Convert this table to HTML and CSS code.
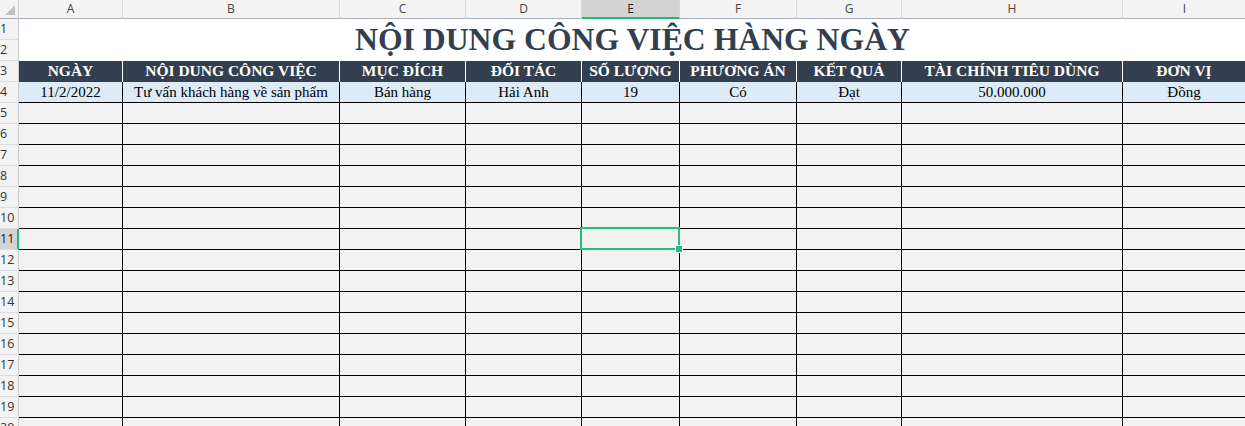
FILE: index.html
```html
<!DOCTYPE html>
<html lang="vi">
<head>
<meta charset="utf-8">
<title>Nội dung công việc hàng ngày</title>
<link rel="stylesheet" href="styles.css">
</head>
<body>
<div class="sheet">
  <div class="corner"><span class="tri"></span></div>
  <div class="ch">A</div><div class="ch">B</div><div class="ch">C</div><div class="ch">D</div><div class="ch sel">E</div><div class="ch">F</div><div class="ch">G</div><div class="ch">H</div><div class="ch last">I</div>

  <div class="rh">1</div>
  <div class="title">NỘI DUNG CÔNG VIỆC HÀNG NGÀY</div>
  <div class="rh">2</div>

  <div class="rh">3</div>
  <div class="hd">NGÀY</div><div class="hd">NỘI DUNG CÔNG VIỆC</div><div class="hd">MỤC ĐÍCH</div><div class="hd">ĐỐI TÁC</div><div class="hd">SỐ LƯỢNG</div><div class="hd">PHƯƠNG ÁN</div><div class="hd">KẾT QUẢ</div><div class="hd">TÀI CHÍNH TIÊU DÙNG</div><div class="hd">ĐƠN VỊ</div>

  <div class="rh">4</div>
  <div class="dt">11/2/2022</div><div class="dt">Tư vấn khách hàng về sản phẩm</div><div class="dt">Bán hàng</div><div class="dt">Hải Anh</div><div class="dt">19</div><div class="dt">Có</div><div class="dt">Đạt</div><div class="dt">50.000.000</div><div class="dt">Đồng</div>

  <div class="rh">5</div><div class="c"></div><div class="c"></div><div class="c"></div><div class="c"></div><div class="c"></div><div class="c"></div><div class="c"></div><div class="c"></div><div class="c"></div>
  <div class="rh">6</div><div class="c"></div><div class="c"></div><div class="c"></div><div class="c"></div><div class="c"></div><div class="c"></div><div class="c"></div><div class="c"></div><div class="c"></div>
  <div class="rh">7</div><div class="c"></div><div class="c"></div><div class="c"></div><div class="c"></div><div class="c"></div><div class="c"></div><div class="c"></div><div class="c"></div><div class="c"></div>
  <div class="rh">8</div><div class="c"></div><div class="c"></div><div class="c"></div><div class="c"></div><div class="c"></div><div class="c"></div><div class="c"></div><div class="c"></div><div class="c"></div>
  <div class="rh">9</div><div class="c"></div><div class="c"></div><div class="c"></div><div class="c"></div><div class="c"></div><div class="c"></div><div class="c"></div><div class="c"></div><div class="c"></div>
  <div class="rh">10</div><div class="c"></div><div class="c"></div><div class="c"></div><div class="c"></div><div class="c"></div><div class="c"></div><div class="c"></div><div class="c"></div><div class="c"></div>
  <div class="rh sel">11</div><div class="c"></div><div class="c"></div><div class="c"></div><div class="c"></div><div class="c active"><span class="handle"></span></div><div class="c"></div><div class="c"></div><div class="c"></div><div class="c"></div>
  <div class="rh">12</div><div class="c"></div><div class="c"></div><div class="c"></div><div class="c"></div><div class="c"></div><div class="c"></div><div class="c"></div><div class="c"></div><div class="c"></div>
  <div class="rh">13</div><div class="c"></div><div class="c"></div><div class="c"></div><div class="c"></div><div class="c"></div><div class="c"></div><div class="c"></div><div class="c"></div><div class="c"></div>
  <div class="rh">14</div><div class="c"></div><div class="c"></div><div class="c"></div><div class="c"></div><div class="c"></div><div class="c"></div><div class="c"></div><div class="c"></div><div class="c"></div>
  <div class="rh">15</div><div class="c"></div><div class="c"></div><div class="c"></div><div class="c"></div><div class="c"></div><div class="c"></div><div class="c"></div><div class="c"></div><div class="c"></div>
  <div class="rh">16</div><div class="c"></div><div class="c"></div><div class="c"></div><div class="c"></div><div class="c"></div><div class="c"></div><div class="c"></div><div class="c"></div><div class="c"></div>
  <div class="rh">17</div><div class="c"></div><div class="c"></div><div class="c"></div><div class="c"></div><div class="c"></div><div class="c"></div><div class="c"></div><div class="c"></div><div class="c"></div>
  <div class="rh">18</div><div class="c"></div><div class="c"></div><div class="c"></div><div class="c"></div><div class="c"></div><div class="c"></div><div class="c"></div><div class="c"></div><div class="c"></div>
  <div class="rh">19</div><div class="c"></div><div class="c"></div><div class="c"></div><div class="c"></div><div class="c"></div><div class="c"></div><div class="c"></div><div class="c"></div><div class="c"></div>
  <div class="rh">20</div><div class="c"></div><div class="c"></div><div class="c"></div><div class="c"></div><div class="c"></div><div class="c"></div><div class="c"></div><div class="c"></div><div class="c"></div>
</div>
</body>
</html>
```

FILE: styles.css
```css
html, body {
  margin: 0;
  padding: 0;
  background: #ffffff;
  overflow: hidden;
}

.sheet {
  display: grid;
  grid-template-columns: 19px 104px 217px 126px 116px 98px 117px 105px 221px 123px;
  grid-template-rows: 19px repeat(20, 21px);
  width: 1245px;
  font-family: "Liberation Serif", "Times New Roman", serif;
}

/* column headers */
.corner {
  position: relative;
  background: #f3f3f3;
  border-right: 1px solid #c9ccd3;
  border-bottom: 1px solid #abafb8;
}
.tri {
  position: absolute;
  right: 3px;
  bottom: 3px;
  width: 0;
  height: 0;
  border-left: 10px solid transparent;
  border-bottom: 10px solid #c2c2c2;
}
.ch {
  background: #f3f3f3;
  border-right: 1px solid #d8d8d8;
  border-bottom: 1px solid #abafb8;
  font-family: "Open Sans", "Noto Sans", sans-serif;
  font-size: 12px;
  color: #444444;
  display: flex;
  align-items: center;
  justify-content: center;
  line-height: 1;
}
.ch.last { border-right: none; }
.ch.sel {
  background: #d3d3d3;
  border-bottom: 2px solid #1fb875;
  color: #222;
}

/* row headers */
.rh {
  background: #f3f3f3;
  border-right: 1px solid #c9ccd3;
  border-bottom: 1px solid #dadce2;
  font-family: "Open Sans", "Noto Sans", sans-serif;
  font-size: 12.5px;
  color: #333333;
  display: flex;
  align-items: center;
  line-height: 1;
}
.rh.sel {
  background: #d3d3d3;
  border-right: 2px solid #1fb875;
  color: #222;
}

/* title */
.title {
  grid-column: 2 / -1;
  grid-row: 2 / 4;
  background: #ffffff;
  display: flex;
  align-items: flex-end;
  justify-content: center;
  font-weight: bold;
  font-size: 31.7px;
  line-height: 1;
  color: #323f4f;
  padding-bottom: 5px;
  white-space: nowrap;
}

/* header row */
.hd {
  background: #333f4f;
  color: #ffffff;
  font-weight: bold;
  font-size: 15.5px;
  border-right: 1px solid #ffffff;
  display: flex;
  align-items: flex-end;
  justify-content: center;
  padding-bottom: 2px;
  white-space: nowrap;
}

/* data row */
.dt {
  background: #ddebf7;
  color: #000000;
  font-size: 15px;
  border-right: 1px solid #000000;
  border-bottom: 1px solid #000000;
  display: flex;
  align-items: flex-end;
  justify-content: center;
  padding-bottom: 1px;
  white-space: nowrap;
}

/* empty cells */
.c {
  background: #f2f2f2;
  border-right: 1px solid #000000;
  border-bottom: 1px solid #000000;
}

.active { position: relative; }
.active::after {
  content: "";
  position: absolute;
  left: -2px;
  top: -2px;
  right: -1px;
  bottom: -1px;
  border: 2px solid #1fc07b;
}
.handle {
  position: absolute;
  right: -4px;
  bottom: -4px;
  width: 6px;
  height: 6px;
  background: #1fc07b;
  border: 1px solid #ffffff;
  z-index: 2;
}
```
